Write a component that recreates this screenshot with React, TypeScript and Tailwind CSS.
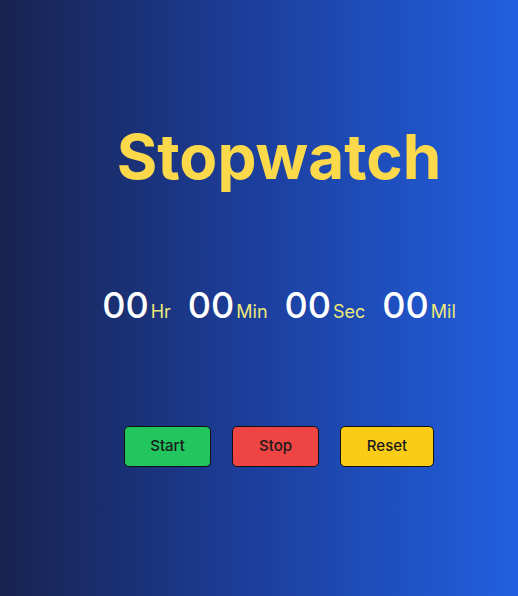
export default function App() {
  const units = [
    { label: 'Hr' },
    { label: 'Min' },
    { label: 'Sec' },
    { label: 'Mil' },
  ];

  return (
    <div className="min-h-screen h-[596px] w-full bg-gradient-to-r from-[#172350] via-[#1c3f9e] to-[#2160e0] font-['Inter',sans-serif] flex flex-col items-center pl-10">
      <h1 className="mt-[121px] text-[62px] leading-[72px] font-bold text-[#fcd94a]">
        Stopwatch
      </h1>

      <div className="mt-[94px] flex items-end gap-[17px]">
        {units.map((u) => (
          <div className="flex items-baseline" key={u.label}>
            <span className="text-[36px] leading-none font-medium text-white">00</span>
            <span className="ml-[2px] text-[18px] leading-none text-[#eee97a]">{u.label}</span>
          </div>
        ))}
      </div>

      <div className="mt-[103px] flex gap-[21px]">
        <button className="w-[87px] h-[41px] rounded-[5px] border border-[#111] bg-[#22c55e] text-[15px] font-medium text-[#1a1a1a]">
          Start
        </button>
        <button className="w-[87px] h-[41px] rounded-[5px] border border-[#111] bg-[#ef4444] text-[15px] font-medium text-[#1a1a1a]">
          Stop
        </button>
        <button className="w-[94px] h-[41px] rounded-[5px] border border-[#111] bg-[#facc15] text-[15px] font-medium text-[#1a1a1a]">
          Reset
        </button>
      </div>
    </div>
  );
}
